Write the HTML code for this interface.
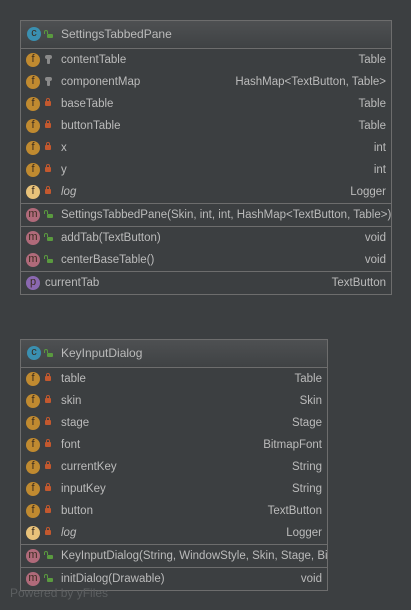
<!DOCTYPE html>
<html><head><style>
body{margin:0;width:411px;height:610px;background:#3c3f41;position:relative;overflow:hidden;font-family:"Liberation Sans",sans-serif;font-size:11.5px;color:#bbbbbb}
.box{position:absolute;border:1px solid #6d6d6d;overflow:hidden}
.hd{position:absolute;left:0;right:0;top:0;background:linear-gradient(#4e5052,#3f4244);border-bottom:1px solid #6d6d6d}
.r{position:absolute;left:0;right:0;height:22px;line-height:22px;white-space:nowrap}
.sep{position:absolute;left:0;right:0;height:1px;background:#6d6d6d}
.ic{position:absolute;left:5px;top:4px;width:14px;height:14px;border-radius:50%;color:#3a2c20;font-size:11px;line-height:13px;text-align:center}
.f{background:#c08a30}.m{background:#b06a7a}.c{background:#3a8fb0}.p{background:#8a68b0}.lg{background:#e8c27a}
.v{position:absolute;left:24px;top:8px;width:6px;height:5px;border-radius:1px}
.v.pr{background:#c3582e}.v.pr:before{content:"";position:absolute;left:1px;top:-3px;width:2px;height:2px;border:1px solid #c3582e;border-bottom:none;border-radius:2px 2px 0 0}
.v.pu{background:#5a9a3f;left:26px;top:10px;width:6px;height:4px}.v.pu:before{content:"";position:absolute;left:-3px;top:-4px;width:2px;height:3px;border:1px solid #5a9a3f;border-bottom:none;border-radius:2px 2px 0 0}
.v.pk{background:#8a8a8a;width:3px;height:6px;left:26px;top:9px}.v.pk:before{content:"";position:absolute;left:-2px;top:-3px;width:7px;height:4px;background:#8a8a8a;border-radius:2px}
.n{position:absolute;left:40px}
.t{position:absolute;right:5px}
i{font-style:italic}
</style></head><body>

<div class="box" style="left:20px;top:20px;width:370px;height:273px">
<div class="hd" style="height:27px"><div class="ic c" style="top:6px;left:6px">c</div><div class="v pu" style="top:13px"></div><span class="n" style="top:0;line-height:27px;font-size:12px">SettingsTabbedPane</span></div>
<div class="r" style="top:28px"><div class="ic f">f</div><div class="v pk"></div><span class="n">contentTable</span><span class="t">Table</span></div>
<div class="r" style="top:50px"><div class="ic f">f</div><div class="v pk"></div><span class="n">componentMap</span><span class="t">HashMap&lt;TextButton, Table&gt;</span></div>
<div class="r" style="top:72px"><div class="ic f">f</div><div class="v pr"></div><span class="n">baseTable</span><span class="t">Table</span></div>
<div class="r" style="top:94px"><div class="ic f">f</div><div class="v pr"></div><span class="n">buttonTable</span><span class="t">Table</span></div>
<div class="r" style="top:116px"><div class="ic f">f</div><div class="v pr"></div><span class="n">x</span><span class="t">int</span></div>
<div class="r" style="top:138px"><div class="ic f">f</div><div class="v pr"></div><span class="n">y</span><span class="t">int</span></div>
<div class="r" style="top:160px"><div class="ic lg">f</div><div class="v pr"></div><span class="n"><i>log</i></span><span class="t">Logger</span></div>
<div class="sep" style="top:182px"></div>
<div class="r" style="top:183px"><div class="ic m">m</div><div class="v pu"></div><span class="n">SettingsTabbedPane(Skin, int, int, HashMap&lt;TextButton, Table&gt;)</span></div>
<div class="sep" style="top:205px"></div>
<div class="r" style="top:206px"><div class="ic m">m</div><div class="v pu"></div><span class="n">addTab(TextButton)</span><span class="t">void</span></div>
<div class="r" style="top:228px"><div class="ic m">m</div><div class="v pu"></div><span class="n">centerBaseTable()</span><span class="t">void</span></div>
<div class="sep" style="top:250px"></div>
<div class="r" style="top:251px"><div class="ic p">p</div><span class="n" style="left:24px">currentTab</span><span class="t">TextButton</span></div>
</div>

<div class="box" style="left:20px;top:339px;width:306px;height:250px">
<div class="hd" style="height:27px"><div class="ic c" style="top:6px;left:6px">c</div><div class="v pu" style="top:13px"></div><span class="n" style="top:0;line-height:27px;font-size:12px">KeyInputDialog</span></div>
<div class="r" style="top:28px"><div class="ic f">f</div><div class="v pr"></div><span class="n">table</span><span class="t">Table</span></div>
<div class="r" style="top:50px"><div class="ic f">f</div><div class="v pr"></div><span class="n">skin</span><span class="t">Skin</span></div>
<div class="r" style="top:72px"><div class="ic f">f</div><div class="v pr"></div><span class="n">stage</span><span class="t">Stage</span></div>
<div class="r" style="top:94px"><div class="ic f">f</div><div class="v pr"></div><span class="n">font</span><span class="t">BitmapFont</span></div>
<div class="r" style="top:116px"><div class="ic f">f</div><div class="v pr"></div><span class="n">currentKey</span><span class="t">String</span></div>
<div class="r" style="top:138px"><div class="ic f">f</div><div class="v pr"></div><span class="n">inputKey</span><span class="t">String</span></div>
<div class="r" style="top:160px"><div class="ic f">f</div><div class="v pr"></div><span class="n">button</span><span class="t">TextButton</span></div>
<div class="r" style="top:182px"><div class="ic lg">f</div><div class="v pr"></div><span class="n"><i>log</i></span><span class="t">Logger</span></div>
<div class="sep" style="top:204px"></div>
<div class="r" style="top:205px"><div class="ic m">m</div><div class="v pu"></div><span class="n">KeyInputDialog(String, WindowStyle, Skin, Stage, BitmapFont)</span></div>
<div class="sep" style="top:227px"></div>
<div class="r" style="top:228px"><div class="ic m">m</div><div class="v pu"></div><span class="n">initDialog(Drawable)</span><span class="t">void</span></div>
</div>

<div style="position:absolute;left:10px;top:586px;color:#5c5f61;font-size:12px">Powered by yFiles</div>
</body></html>
